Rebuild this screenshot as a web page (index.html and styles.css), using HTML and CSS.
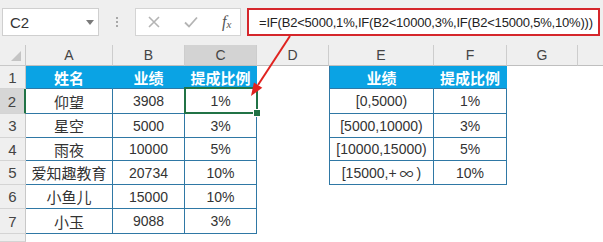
FILE: index.html
```html
<!DOCTYPE html>
<html lang="zh-CN">
  <head>
    <meta charset="UTF-8" />
    <title>提成比例</title>
    <link rel="stylesheet" href="styles.css">
  </head>
  <body>
    <div class="window">
      <!-- Formula bar -->
      <div class="formula-bar">
        <div class="name-box">
          <span>C2</span>
          <svg class="caret" width="8" height="5" viewBox="0 0 8 5"><path d="M0 0H8L4 5Z" fill="#7a7a7a"/></svg>
        </div>
        <div class="grip"><i></i><i></i><i></i></div>
        <div class="fx-box">
          <svg width="12" height="12" viewBox="0 0 12 12"><path d="M1 1L11 11M11 1L1 11" stroke="#b4b4b4" stroke-width="1.6"/></svg>
          <svg width="14" height="12" viewBox="0 0 14 12"><path d="M1 6.5L5 10.5L13 1.5" stroke="#b4b4b4" stroke-width="1.8" fill="none"/></svg>
          <span class="fx">f<sub>x</sub></span>
        </div>
        <div class="formula">=IF(B2&lt;5000,1%,IF(B2&lt;10000,3%,IF(B2&lt;15000,5%,10%)))</div>
      </div>

      <!-- Sheet -->
      <div class="sheet">
        <div class="corner"><span class="tri"></span></div>
        <div class="hd">A</div>
        <div class="hd">B</div>
        <div class="hd sel">C</div>
        <div class="hd">D</div>
        <div class="hd">E</div>
        <div class="hd">F</div>
        <div class="hd">G</div>
        <div class="hd last"></div>

        <div class="rn">1</div>
        <div class="t th">姓名</div>
        <div class="t th">业绩</div>
        <div class="t th">提成比例</div>
        <div class="c"></div>
        <div class="t th tl">业绩</div>
        <div class="t th">提成比例</div>
        <div class="c"></div>
        <div class="c"></div>

        <div class="rn sel">2</div>
        <div class="t zh">仰望</div>
        <div class="t">3908</div>
        <div class="t active">1%</div>
        <div class="c"></div>
        <div class="t tl">[0,5000)</div>
        <div class="t">1%</div>
        <div class="c"></div>
        <div class="c"></div>

        <div class="rn">3</div>
        <div class="t zh">星空</div>
        <div class="t">5000</div>
        <div class="t">3%</div>
        <div class="c"></div>
        <div class="t tl">[5000,10000)</div>
        <div class="t">3%</div>
        <div class="c"></div>
        <div class="c"></div>

        <div class="rn">4</div>
        <div class="t zh">雨夜</div>
        <div class="t">10000</div>
        <div class="t">5%</div>
        <div class="c"></div>
        <div class="t tl">[10000,15000)</div>
        <div class="t">5%</div>
        <div class="c"></div>
        <div class="c"></div>

        <div class="rn">5</div>
        <div class="t zh">爱知趣教育</div>
        <div class="t">20734</div>
        <div class="t">10%</div>
        <div class="c"></div>
        <div class="t tl">[15000,+<span class="inf">∞</span>)</div>
        <div class="t">10%</div>
        <div class="c"></div>
        <div class="c"></div>

        <div class="rn">6</div>
        <div class="t zh">小鱼儿</div>
        <div class="t">15000</div>
        <div class="t">10%</div>
        <div class="c"></div>
        <div class="c"></div>
        <div class="c"></div>
        <div class="c"></div>
        <div class="c"></div>

        <div class="rn">7</div>
        <div class="t zh">小玉</div>
        <div class="t">9088</div>
        <div class="t">3%</div>
        <div class="c"></div>
        <div class="c"></div>
        <div class="c"></div>
        <div class="c"></div>
        <div class="c"></div>

        <div class="rn"></div>
        <div class="c"></div>
        <div class="c"></div>
        <div class="c"></div>
        <div class="c"></div>
        <div class="c"></div>
        <div class="c"></div>
        <div class="c"></div>
        <div class="c"></div>
      </div>

      <!-- Callout arrow from formula to C2 -->
      <svg class="arrow" width="603" height="242" viewBox="0 0 603 242">
        <line x1="290" y1="36" x2="258" y2="85" stroke="#e0221f" stroke-width="2"/>
        <polygon points="251,96 262.3,87.8 253.9,82.4" fill="#e0221f"/>
      </svg>
    </div>
  </body>
</html>
```

FILE: styles.css
```css
* {
  box-sizing: border-box;
}
body {
  margin: 0;
  font-family: "Liberation Sans", "Noto Sans CJK SC", sans-serif;
  color: #333;
  background: #fff;
}
.window {
  position: relative;
  width: 603px;
  height: 242px;
  overflow: hidden;
  background: #fff;
}

/* formula bar */
.formula-bar {
  display: flex;
  height: 45px;
  padding: 8px 0 0 2px;
  background: #efefef;
}
.name-box {
  display: flex;
  align-items: center;
  justify-content: space-between;
  width: 97px;
  height: 28px;
  padding: 0 4px 0 7px;
  background: #fff;
  border: 1px solid #cfcfcf;
  font-size: 15px;
  color: #333;
}
.grip {
  display: flex;
  flex-direction: column;
  align-items: center;
  justify-content: center;
  gap: 2px;
  width: 36px;
  height: 28px;
}
.grip i {
  width: 2px;
  height: 2px;
  background: #a8a8a8;
}
.fx-box {
  display: flex;
  align-items: center;
  gap: 24px;
  width: 106px;
  height: 28px;
  padding-left: 12px;
  background: #fff;
  border: 1px solid #d4d4d4;
}
.fx {
  font-family: "Liberation Serif", serif;
  font-style: italic;
  font-size: 16px;
  color: #555;
}
.fx sub {
  font-size: 11px;
  vertical-align: -1px;
}
.formula {
  display: flex;
  align-items: center;
  width: 353px;
  height: 28px;
  margin-left: 6px;
  padding-left: 10px;
  background: #fff;
  border: 2px solid #d5262b;
  font-size: 13px;
  letter-spacing: -0.2px;
  color: #222;
  white-space: nowrap;
}

/* sheet grid */
.sheet {
  display: grid;
  grid-template-columns: 26px 87px 72px 72px 72px 105px 73px 71px 1fr;
  grid-template-rows: 21px 23px 25px 24px 23px 24px 24px 25px 1fr;
  height: 197px;
  font-size: 14px;
}
.corner,
.hd,
.rn {
  display: flex;
  align-items: center;
  justify-content: center;
  background: #efefef;
  color: #444;
}
.corner {
  position: relative;
  border-right: 1px solid #c8c8c8;
  border-bottom: 1px solid #c8c8c8;
}
.tri {
  position: absolute;
  right: 4px;
  bottom: 4px;
  width: 0;
  height: 0;
  border-left: 10px solid transparent;
  border-bottom: 10px solid #c4c4c4;
}
.hd {
  border-right: 1px solid #cdcdcd;
  border-bottom: 1px solid #bfbfbf;
  font-size: 14px;
}
.hd.last {
  border-right: none;
}
.hd.sel {
  background: #d3d3d3;
}
.rn {
  border-right: 1px solid #c8c8c8;
  border-bottom: 1px solid #d4d4d4;
  font-size: 15px;
}
.rn.sel {
  background: #d6d6d6;
  border-right: 2px solid #217346;
}
.c {
  background: #fff;
}
.t {
  display: flex;
  align-items: center;
  justify-content: center;
  background: #fff;
  border-right: 1px solid #2f78a5;
  border-bottom: 1px solid #2f78a5;
  white-space: nowrap;
}
.t.tl {
  border-left: 1px solid #2f78a5;
}
.t.th {
  background: #0aa3e4;
  border-right-color: #0aa3e4;
  border-bottom-color: #2f78a5;
  color: #fff;
  font-weight: bold;
  font-size: 15px;
}
.t.th.tl {
  border-left-color: #2f78a5;
}
.zh {
  font-size: 15px;
}
.inf {
  font-family: "Noto Sans CJK SC", sans-serif;
  padding: 0 3px;
}

/* active cell */
.active {
  position: relative;
}
.active::after {
  content: "";
  position: absolute;
  left: -1px;
  top: -2px;
  right: -2px;
  bottom: -1px;
  border: 2px solid #217346;
}
.active::before {
  content: "";
  position: absolute;
  right: -5px;
  bottom: -4px;
  width: 6px;
  height: 6px;
  background: #217346;
  border: 1px solid #fff;
  z-index: 1;
}

.arrow {
  position: absolute;
  left: 0;
  top: 0;
  pointer-events: none;
}
```
